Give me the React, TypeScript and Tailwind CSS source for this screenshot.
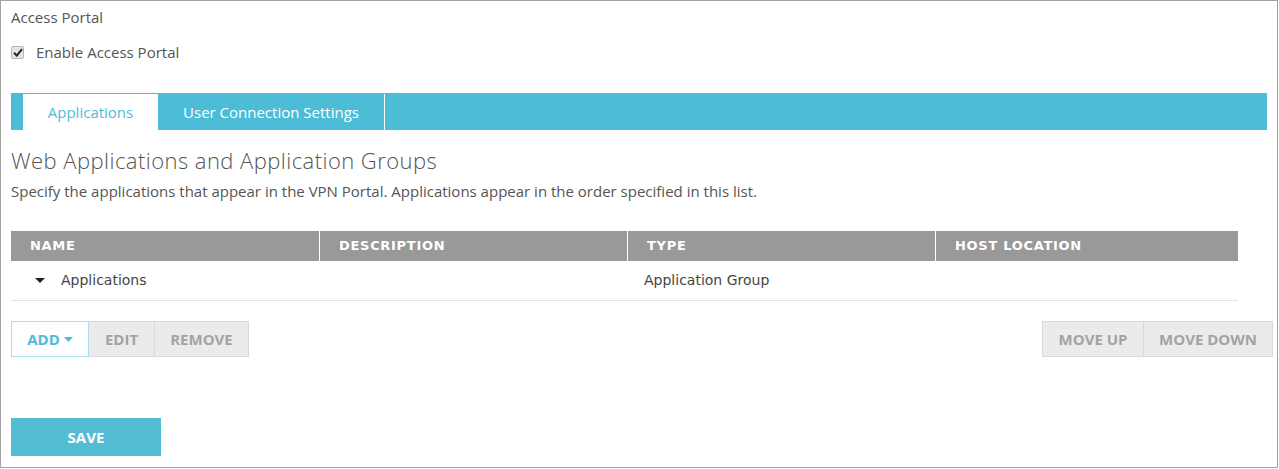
import { type JSX } from "react";

const columns = ["NAME", "DESCRIPTION", "TYPE", "HOST LOCATION"];

export default function App(): JSX.Element {
    return (
        <div className="w-[1279px] h-[469px] bg-white font-['Open_Sans',sans-serif] text-[#555]">
            <div className="w-[1278px] h-[468px] border border-[#a3a3a3] px-[10px] pt-[6px]">
                <div className="text-[15px] leading-[20px]">Access Portal</div>

                <label className="flex items-center mt-[15px] h-[20px]">
                    <span className="w-[13px] h-[13px] rounded-[2px] border border-[#b5b5b5] bg-[#e4e4e4] flex items-center justify-center">
                        <svg width="10" height="9" viewBox="0 0 10 9">
                            <path d="M1 4.8 L3.8 7.6 L9 1.2" stroke="#222" strokeWidth="2" fill="none" />
                        </svg>
                    </span>
                    <span className="ml-[12px] text-[15px]">Enable Access Portal</span>
                </label>

                {/* tabs */}
                <div className="mt-[31px] h-[37px] bg-[#4dbcd6] flex pl-[12px] pt-[1px]">
                    <div className="w-[135px] bg-white text-[#4dbcd6] text-[15px] flex items-center justify-center">
                        Applications
                    </div>
                    <div className="w-[227px] text-white text-[15px] flex items-center justify-center border-r border-white">
                        User Connection Settings
                    </div>
                </div>

                <h2 className="mt-[16px] text-[22px] leading-[28px] font-light tracking-[0.45px]">
                    Web Applications and Application Groups
                </h2>
                <p className="text-[15px] mt-[7px] leading-[20px]">
                    Specify the applications that appear in the VPN Portal. Applications appear in the order specified in this list.
                </p>

                {/* table */}
                <div className="w-[1227px] mt-[30px] font-['DejaVu_Sans',sans-serif]">
                    <div className="grid grid-cols-[308px_308px_308px_303px] h-[30px] bg-[#999]">
                        {columns.map((c, i) => (
                            <div key={c} className={`flex items-center pl-[19px] text-white text-[13px] font-bold tracking-[0.7px] ${i > 0 ? "border-l border-white" : ""}`}>
                                {c}
                            </div>
                        ))}
                    </div>
                    <div className="grid grid-cols-[308px_308px_308px_303px] h-[40px] border-b border-[#e3e3e3] text-[14px] text-[#444]">
                        <div className="flex items-center pl-[24px]">
                            <svg width="10" height="5" viewBox="0 0 10 5" className="mr-[16px]">
                                <path d="M0 0 L10 0 L5 5 Z" fill="#222" />
                            </svg>
                            Applications
                        </div>
                        <div />
                        <div className="flex items-center pl-[17px]">Application Group</div>
                        <div />
                    </div>
                </div>

                {/* action buttons */}
                <div className="flex justify-between mt-[20px] text-[15px] font-bold">
                    <div className="flex h-[36px]">
                        <button className="w-[78px] border border-[#a8dfea] text-[#4dbcd6] flex items-center justify-center gap-[4px]">
                            ADD
                            <svg width="9" height="5" viewBox="0 0 9 5"><path d="M0 0 L9 0 L4.5 5 Z" fill="#4dbcd6" /></svg>
                        </button>
                        <button className="w-[66px] bg-[#ebebeb] border border-l-0 border-[#d9d9d9] text-[#a3a3a3]">EDIT</button>
                        <button className="w-[94px] bg-[#ebebeb] border border-l-0 border-[#d9d9d9] text-[#a3a3a3]">REMOVE</button>
                    </div>
                    <div className="flex h-[36px] mr-[-6px]">
                        <button className="w-[102px] bg-[#ebebeb] border border-[#d9d9d9] text-[#a3a3a3]">MOVE UP</button>
                        <button className="w-[129px] bg-[#ebebeb] border border-l-0 border-[#d9d9d9] text-[#a3a3a3]">MOVE DOWN</button>
                    </div>
                </div>

                <button className="mt-[61px] w-[150px] h-[38px] bg-[#53bdd4] text-white text-[15px] font-bold">SAVE</button>
            </div>
        </div>
    );
}
